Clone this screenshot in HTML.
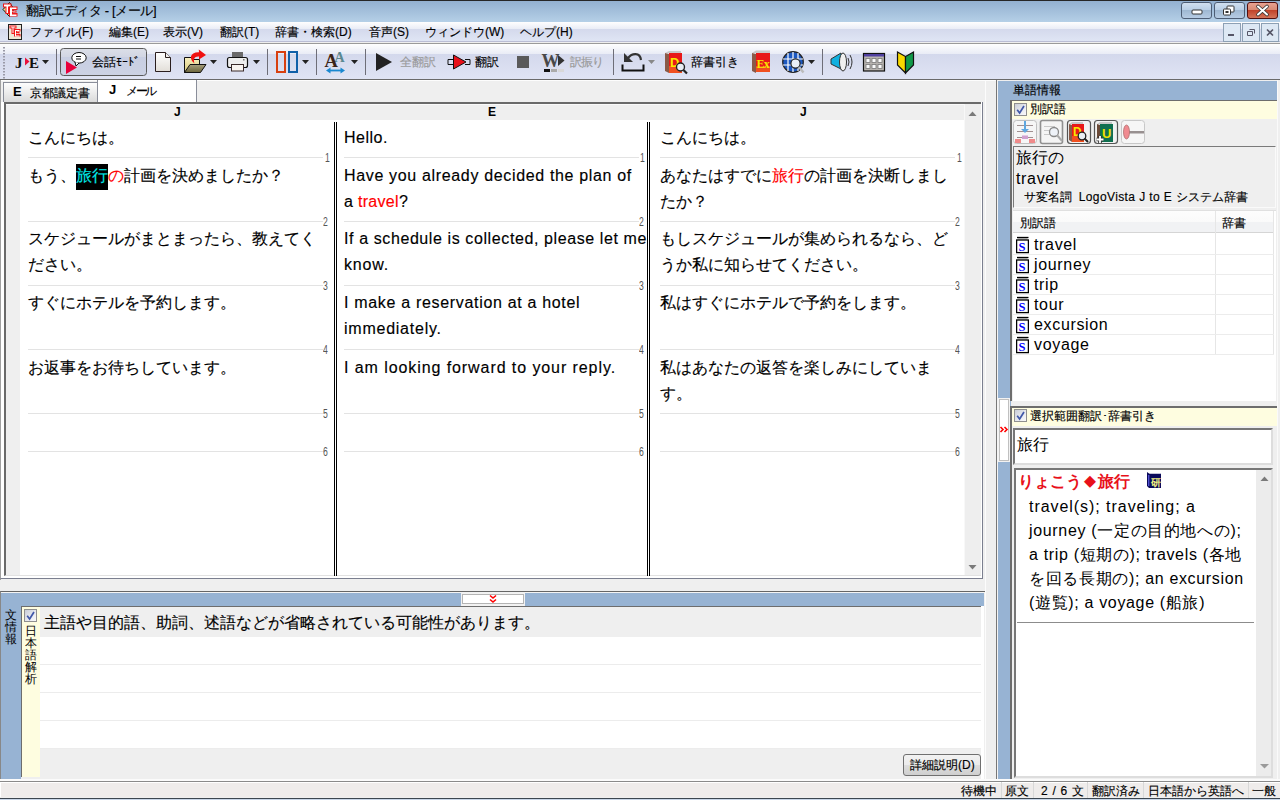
<!DOCTYPE html>
<html lang="ja"><head><meta charset="utf-8">
<style>
*{box-sizing:border-box}
html,body{margin:0;padding:0;width:1280px;height:800px;overflow:hidden;background:#efefef;font-family:"Liberation Sans",sans-serif;color:#000}
.a{position:absolute}
.t12{font-size:12px;line-height:14px;white-space:nowrap;-webkit-text-stroke:0.15px}
.ed{font-size:16px;line-height:26px;white-space:nowrap;position:absolute;-webkit-text-stroke:0.15px}
.en{font-size:16px;letter-spacing:0.66px}
.sep{position:absolute;height:1px;background:#e3e3e3}
.num{position:absolute;font-size:12px;line-height:12px;color:#555;transform:scaleX(0.72);transform-origin:left}
.dv{position:absolute;top:122px;height:454px;width:3px;border-left:1px solid #000;border-right:1px solid #000}
</style></head><body>
<!-- title bar -->
<div class="a" style="left:0;top:0;width:1280px;height:1px;background:#262626"></div>
<div class="a" style="left:0;top:1px;width:1280px;height:21px;background:linear-gradient(#93b0d0,#b5d0e7)"></div>
<div class="a t12" style="left:26px;top:4px;font-size:13px;line-height:14px;color:#000;letter-spacing:-0.4px">翻訳エディタ - [メール]</div>
<!-- menu bar -->
<div class="a" style="left:0;top:22px;width:1280px;height:7px;background:linear-gradient(#fefefe,#e9ecf6)"></div>
<div class="a" style="left:0;top:29px;width:1280px;height:12px;background:linear-gradient(#d4d9ec,#dfe5f4)"></div>
<div class="a" style="left:0;top:41px;width:1280px;height:1px;background:#babdd4"></div>
<div class="a" style="left:0;top:42px;width:1280px;height:1px;background:#eeeeee"></div>
<div class="a" style="left:0;top:43px;width:1280px;height:1px;background:#9a9a9a"></div>
<div class="a t12" style="left:30px;top:25px">ファイル(F)</div>
<div class="a t12" style="left:109px;top:25px">編集(E)</div>
<div class="a t12" style="left:163px;top:25px">表示(V)</div>
<div class="a t12" style="left:220px;top:25px">翻訳(T)</div>
<div class="a t12" style="left:275px;top:25px">辞書・検索(D)</div>
<div class="a t12" style="left:369px;top:25px">音声(S)</div>
<div class="a t12" style="left:425px;top:25px">ウィンドウ(W)</div>
<div class="a t12" style="left:520px;top:25px">ヘルプ(H)</div>
<!-- toolbar -->
<div class="a" style="left:0;top:44px;width:1280px;height:10px;background:linear-gradient(#fefefe,#e9ecf6)"></div>
<div class="a" style="left:0;top:54px;width:1280px;height:25px;background:linear-gradient(#d3d8ec,#e0e4f4)"></div>
<div class="a" style="left:0;top:79px;width:1280px;height:1px;background:#6a6a6a"></div>
<!-- toolbar svg -->
<svg class="a" style="left:0;top:0" width="1280" height="80" viewBox="0 0 1280 80">
<defs>
<linearGradient id="btnG" x1="0" y1="0" x2="0" y2="1"><stop offset="0" stop-color="#dcdfe8"/><stop offset="0.3" stop-color="#d2d6e3"/><stop offset="0.31" stop-color="#c8cee2"/><stop offset="1" stop-color="#ccd2e4"/></linearGradient>
<linearGradient id="minG" x1="0" y1="0" x2="0" y2="1"><stop offset="0" stop-color="#d3e1f0"/><stop offset="0.45" stop-color="#b9cfe6"/><stop offset="0.5" stop-color="#9fb8d2"/><stop offset="1" stop-color="#b8cde4"/></linearGradient>
<linearGradient id="clsG" x1="0" y1="0" x2="0" y2="1"><stop offset="0" stop-color="#e9a493"/><stop offset="0.45" stop-color="#d88a74"/><stop offset="0.5" stop-color="#c1432a"/><stop offset="1" stop-color="#d5775c"/></linearGradient>
<linearGradient id="docG" x1="0" y1="0" x2="0" y2="1"><stop offset="0" stop-color="#ffffff"/><stop offset="1" stop-color="#e2ded8"/></linearGradient>
<linearGradient id="fldG" x1="0" y1="0" x2="0" y2="1"><stop offset="0" stop-color="#f8f0c0"/><stop offset="1" stop-color="#d8c878"/></linearGradient>
<linearGradient id="fldF" x1="0" y1="0" x2="0" y2="1"><stop offset="0" stop-color="#a8a080"/><stop offset="1" stop-color="#6a6438"/></linearGradient>
</defs>
<!-- title icon -->
<path d="M9.5 2.5 L14 9 L9.5 16.5 L3 9.5 Z" fill="#f4e890" stroke="#111" stroke-width="1"/>
<path d="M3 3.5 h8.5 v4 h-2.5 v6.5 h-3.5 v-6.5 h-2.5 z" fill="#f01818"/>
<path d="M4 4.5 h6.5 v2 h-2.5 v6.5 h-1.5 v-6.5 h-2.5 z" fill="#fff"/>
<path d="M9 6.5 h8.5 v3.5 h-4.5 v0.5 h3.5 v2 h-3.5 v0.5 h4.5 v3.5 h-8.5 z" fill="#f01818"/>
<path d="M10 7.5 h6.5 v1.5 h-4.5 v2.5 h3.5 v0.5 h-3.5 v2.5 h4.5 v1.5 h-6.5 z" fill="#fff"/>
<!-- menu icon -->
<rect x="8.5" y="24.5" width="13" height="15" fill="#ece8d8" stroke="#222" stroke-width="1"/>
<path d="M9.5 25.5 h7 v3 h-2 v5.5 h-3 v-5.5 h-2 z" fill="#f01818"/>
<path d="M10.5 26.5 h5 v1 h-2 v5.5 h-1 v-5.5 h-2 z" fill="#fff"/>
<path d="M14 29 h6.5 v2.5 h-3.5 v0.5 h2.5 v1.5 h-2.5 v0.5 h3.5 v2.5 h-6.5 z" fill="#f01818"/>
<path d="M15 30 h4.5 v1 h-3.5 v2 h2.5 v0.5 h-2.5 v2 h3.5 v1 h-4.5 z" fill="#fff"/>
<!-- window buttons -->
<rect x="1181.5" y="2.5" width="30" height="16" rx="2.5" fill="url(#minG)" stroke="#4d5d74"/>
<rect x="1192" y="10" width="10" height="4" rx="1" fill="#fff" stroke="#333" stroke-width="1"/>
<rect x="1214.5" y="2.5" width="30" height="16" rx="2.5" fill="url(#minG)" stroke="#4d5d74"/>
<rect x="1227" y="6" width="7" height="6" rx="0.8" fill="#fff" stroke="#333" stroke-width="1"/>
<rect x="1223.5" y="9" width="7" height="6" rx="0.8" fill="#fff" stroke="#333" stroke-width="1"/>
<rect x="1225.5" y="11" width="3" height="2" fill="#333"/>
<rect x="1247.5" y="2.5" width="30" height="16" rx="2.5" fill="url(#clsG)" stroke="#501010"/>
<path d="M1258 6.5 L1267 14.5 M1267 6.5 L1258 14.5" stroke="#333" stroke-width="3.6" stroke-linecap="round"/>
<path d="M1258 6.5 L1267 14.5 M1267 6.5 L1258 14.5" stroke="#fff" stroke-width="2" stroke-linecap="round"/>
<!-- mdi buttons -->
<rect x="1223.5" y="23.5" width="17" height="18" fill="#dde8f4" stroke="#8da0b4"/>
<rect x="1228" y="34" width="6" height="2" fill="#556"/>
<rect x="1242.5" y="23.5" width="17" height="18" fill="#dde8f4" stroke="#8da0b4"/>
<path d="M1249.5 29.5 h5 v4 M1247.5 31.5 h5 v4 h-5 z" fill="none" stroke="#556" stroke-width="1"/>
<rect x="1261.5" y="23.5" width="17" height="18" fill="#dde8f4" stroke="#8da0b4"/>
<path d="M1267 29.5 l6 6 M1273 29.5 l-6 6" stroke="#556" stroke-width="1.6"/>
<!-- grip -->
<g fill="#9a9aa8"><rect x="3" y="47" width="2" height="1.5"/><rect x="3" y="50" width="2" height="1.5"/><rect x="3" y="53" width="2" height="1.5"/><rect x="3" y="56" width="2" height="1.5"/><rect x="3" y="59" width="2" height="1.5"/><rect x="3" y="62" width="2" height="1.5"/><rect x="3" y="65" width="2" height="1.5"/><rect x="3" y="68" width="2" height="1.5"/><rect x="3" y="71" width="2" height="1.5"/><rect x="3" y="74" width="2" height="1.5"/><rect x="3" y="77" width="2" height="1.5"/></g>
<!-- J>E -->
<text x="15" y="68" font-family="Liberation Serif" font-weight="bold" font-size="15" fill="#111">J</text>
<path d="M25 57.5 L29.5 61.5 L25 65.5 Z" fill="#e8103c"/>
<text x="29" y="68" font-family="Liberation Serif" font-weight="bold" font-size="15" fill="#111">E</text>
<path d="M42 60 h7 l-3.5 4 z" fill="#222"/>
<!-- separators -->
<g fill="#6e6e78"><rect x="56" y="49" width="1" height="26"/><rect x="267" y="49" width="1" height="26"/><rect x="316" y="49" width="1" height="26"/><rect x="365" y="49" width="1" height="26"/><rect x="613" y="49" width="1" height="26"/><rect x="822" y="49" width="1" height="26"/></g>
<!-- kaiwa button -->
<rect x="60.5" y="48.5" width="86" height="27" rx="3" fill="url(#btnG)" stroke="#5a5a5a"/>
<ellipse cx="79" cy="57.8" rx="7.2" ry="5.3" fill="#fff" stroke="#111" stroke-width="1"/>
<path d="M75 62 L76 66 L79 63" fill="#fff" stroke="#111" stroke-width="1"/>
<path d="M76 56.5 h5 M76 59 h5" stroke="#111" stroke-width="1"/>
<path d="M66 61 L77 67.5 L66 74 Z" fill="#e8003c"/>
<!-- new doc -->
<path d="M155.5 52.5 h10 l5 5 v14 h-15 z" fill="url(#docG)" stroke="#2a1e1e" stroke-width="1"/>
<path d="M165.5 52.5 v5 h5" fill="#f0f0f0" stroke="#2a1e1e" stroke-width="1"/>
<!-- folder -->
<path d="M184.5 72.5 V57.5 h7 l1.5 2 h6.5 v13 z" fill="url(#fldG)" stroke="#111" stroke-width="1"/>
<path d="M184.5 72.5 L190 64.5 H206 L200.5 72.5 Z" fill="url(#fldF)" stroke="#111" stroke-width="1"/>
<path d="M194.5 63.5 C189 59 189.5 52 199 52.2 L198.8 49.5 L206 55 L199 59.5 L199 56.5 C194.5 56 193 59 194.5 63.5 Z" fill="#f01010"/>
<path d="M210 60 h7 l-3.5 4 z" fill="#222"/>
<!-- printer -->
<rect x="232" y="52" width="11" height="5" fill="#6a6a6a"/>
<rect x="227.5" y="57.5" width="20" height="10" rx="2" fill="#eeeeee" stroke="#111" stroke-width="1.2"/>
<rect x="231.5" y="64.5" width="12" height="6.5" fill="#f8f4f0" stroke="#3a2a2a" stroke-width="1"/>
<rect x="243" y="59" width="1.5" height="1.5" fill="#777"/>
<path d="M253 60 h7 l-3.5 4 z" fill="#222"/>
<!-- columns -->
<rect x="277" y="52" width="8" height="20" fill="none" stroke="#d84010" stroke-width="2"/>
<rect x="289" y="52" width="8" height="20" fill="none" stroke="#1060a8" stroke-width="2"/>
<path d="M302 60 h7 l-3.5 4 z" fill="#222"/>
<!-- AA -->
<text x="334.5" y="62" font-family="Liberation Serif" font-weight="bold" font-size="14" fill="#5a8890">A</text>
<text x="324.5" y="67" font-family="Liberation Serif" font-weight="bold" font-size="18.5" fill="#3a2418">A</text>
<path d="M326 70.5 L330.5 67.5 V73.5 Z M345 70.5 L340.5 67.5 V73.5 Z" fill="#1a88d0"/>
<rect x="329" y="69.6" width="13" height="1.8" fill="#1a88d0"/>
<path d="M351 60 h7 l-3.5 4 z" fill="#222"/>
<!-- play -->
<path d="M376 53 L392 62 L376 71 Z" fill="#222"/>
<!-- translate -->
<path d="M453 59.5 h-5 v5 h5 M465 59.5 h5 v5 h-5" fill="none" stroke="#111" stroke-width="1"/>
<path d="M453.5 55 L466 62 L453.5 69 Z" fill="#e8101a" stroke="#111" stroke-width="1"/>
<!-- stop -->
<rect x="517" y="56" width="12" height="12" fill="#5a5a5a"/>
<!-- W -->
<text x="541.5" y="67" font-family="Liberation Serif" font-weight="bold" font-size="19" fill="#484848" transform="translate(541.5 67) scale(0.95 1) translate(-541.5 -67)">W</text>
<path d="M558 55 L564.5 60.5 L558 66 Z" fill="#333"/>
<rect x="544" y="69" width="6" height="3" fill="#111"/><rect x="551" y="69" width="6" height="3" fill="#aaa"/><rect x="558" y="69" width="6" height="3" fill="#d8d8d8"/>
<!-- undo -->
<path d="M622.5 64.5 v6 h21 v-6" fill="none" stroke="#111" stroke-width="2"/>
<path d="M624 53 L624 62 L633 62 Z" fill="#333"/>
<path d="M628 58 C632 53 640 52 641 60" fill="none" stroke="#333" stroke-width="2.2"/>
<path d="M648 60 h7 l-3.5 4 z" fill="#888"/>
<!-- dict book -->
<path d="M665 53 L669 51 L681 51 L681 53 Z" fill="#c8c8c8"/>
<path d="M665 53 L669 54 V73 L665 71 Z" fill="#8a5a48"/>
<rect x="669" y="53" width="13" height="20" fill="#e81818"/>
<rect x="669" y="66" width="13" height="7" fill="#f05020"/>
<text x="670" y="67" font-family="Liberation Sans" font-weight="bold" font-size="13" fill="#f8e800">D</text>
<circle cx="680.5" cy="67" r="4" fill="#e8eef4" stroke="#222" stroke-width="1.4"/>
<path d="M683.5 70 L687 73.5" stroke="#222" stroke-width="2.2"/>
<!-- Ex book -->
<path d="M752 53 L756 50.5 L770 50.5 L770 53 Z" fill="#c8c8c8"/>
<path d="M752 53 L756 54 V73 L752 71 Z" fill="#8a5a48"/>
<rect x="756" y="53" width="14" height="19" fill="#e81818"/>
<rect x="756" y="66" width="14" height="6" fill="#f05020"/>
<text x="756.5" y="67.5" font-family="Liberation Serif" font-weight="bold" font-size="12" fill="#f8e800" letter-spacing="-0.8">Ex</text>
<!-- globe -->
<circle cx="793" cy="62" r="10.3" fill="#1c58c0" stroke="#222" stroke-width="1.2"/>
<path d="M783 59 h20 M783 65 h20 M788 53 v18 M793 52 v20 M798 53 v18" stroke="#fff" stroke-width="1.2"/>
<circle cx="795.5" cy="63.5" r="4.6" fill="#e8eef6" stroke="#222" stroke-width="1.2"/>
<path d="M799 67 L803.5 72.5" stroke="#bbb" stroke-width="2.4"/>
<path d="M808 60 h7 l-3.5 4 z" fill="#222"/>
<!-- speaker -->
<path d="M831 59 L841 53 L843 70 L831 64 Z" fill="#10b0e0" stroke="#333" stroke-width="1"/>
<ellipse cx="843" cy="62" rx="3.5" ry="9" fill="#f0f0f0" stroke="#333" stroke-width="1"/>
<path d="M848 58 Q850 62 848 66 M850 55 Q854 62 850 69" fill="none" stroke="#333" stroke-width="1"/>
<!-- grid -->
<rect x="863.5" y="53.5" width="21" height="17.5" fill="#b8b4b0" stroke="#111" stroke-width="1.2"/>
<rect x="864" y="54" width="20" height="2.5" fill="#5040a0"/>
<g fill="#fafafa" stroke="#777" stroke-width="0.8"><rect x="866" y="58.5" width="4" height="4"/><rect x="872" y="58.5" width="4" height="4"/><rect x="878" y="58.5" width="4" height="4"/><rect x="866" y="64.5" width="4" height="4"/><rect x="872" y="64.5" width="4" height="4"/><rect x="878" y="64.5" width="4" height="4"/></g>
<!-- wakaba -->
<path d="M897.5 52 L905.5 56.5 V73 L897.5 65 Z" fill="#f8d800" stroke="#111" stroke-width="1.2"/>
<path d="M913.5 52 L905.5 56.5 V73 L913.5 65 Z" fill="#109848" stroke="#111" stroke-width="1.2"/>
</svg>
<div class="a t12" style="left:92px;top:55px">会話ﾓｰﾄﾞ</div>
<div class="a t12" style="left:400px;top:55px;color:#999">全翻訳</div>
<div class="a t12" style="left:475px;top:55px">翻訳</div>
<div class="a t12" style="left:570px;top:55px;color:#999;letter-spacing:-1px">訳振り</div>
<div class="a t12" style="left:691px;top:55px">辞書引き</div>
<!-- tabs row -->
<div class="a" style="left:0;top:80px;width:996px;height:22px;background:#efefef"></div>
<div class="a" style="left:0;top:80px;width:996px;height:1px;background:#fdfdfd"></div>
<div class="a" style="left:0;top:80px;width:1px;height:500px;background:#a0a0a0"></div>
<div class="a" style="left:3px;top:82px;width:95px;height:20px;border:1px solid #8a8e9a;border-bottom:none;background:linear-gradient(#fdfdfd,#ececec 50%,#dadada)"></div>
<div class="a" style="left:13px;top:85px;font-weight:bold;font-size:13px;line-height:14px">E</div>
<div class="a t12" style="left:30px;top:86px">京都議定書</div>
<div class="a" style="left:97px;top:80px;width:100px;height:22px;border:1px solid #8a8e9a;border-top:none;border-bottom:none;background:#fff"></div>
<div class="a" style="left:109px;top:83px;font-weight:bold;font-size:13px;line-height:14px">J</div>
<div class="a t12" style="left:126px;top:84px;letter-spacing:-2.3px">メール</div>
<!-- editor frame -->
<div class="a" style="left:0;top:102px;width:983px;height:477px;border-left:1px solid #a0a0a0;border-right:1px solid #7b7f8f;border-bottom:1px solid #7b7f8f;background:#fff"></div>
<div class="a" style="left:4px;top:102px;width:977px;height:474px;border-left:2px solid #6a6a6a;border-top:2px solid #6a6a6a;border-bottom:1px solid #e2e2e2;background:#efefef"></div>
<div class="a" style="left:6px;top:104px;width:958px;height:1px;background:#fafafa"></div>
<div class="a" style="left:20px;top:120px;width:944px;height:455px;background:#fff"></div>
<div class="a" style="left:964px;top:104px;width:17px;height:471px;background:#eeeeee;border-left:1px solid #f8f8f8"></div>
<div class="a" style="left:174px;top:105px;font-size:12px;line-height:14px;font-weight:bold">J</div>
<div class="a" style="left:488px;top:105px;font-size:12px;line-height:14px;font-weight:bold">E</div>
<div class="a" style="left:800px;top:105px;font-size:12px;line-height:14px;font-weight:bold">J</div>
<div class="dv" style="left:334px"></div>
<div class="dv" style="left:647px"></div>
<!-- separators -->
<div class="sep" style="left:28px;top:157px;width:295px"></div><div class="num" style="left:325px;top:152px">1</div>
<div class="sep" style="left:28px;top:221px;width:295px"></div><div class="num" style="left:323px;top:216px">2</div>
<div class="sep" style="left:28px;top:285px;width:295px"></div><div class="num" style="left:323px;top:280px">3</div>
<div class="sep" style="left:28px;top:349px;width:295px"></div><div class="num" style="left:323px;top:344px">4</div>
<div class="sep" style="left:28px;top:413px;width:295px"></div><div class="num" style="left:323px;top:408px">5</div>
<div class="sep" style="left:28px;top:451px;width:295px"></div><div class="num" style="left:323px;top:446px">6</div>
<div class="sep" style="left:344px;top:157px;width:295px"></div><div class="num" style="left:640px;top:152px">1</div>
<div class="sep" style="left:344px;top:221px;width:295px"></div><div class="num" style="left:639px;top:216px">2</div>
<div class="sep" style="left:344px;top:285px;width:295px"></div><div class="num" style="left:639px;top:280px">3</div>
<div class="sep" style="left:344px;top:349px;width:295px"></div><div class="num" style="left:639px;top:344px">4</div>
<div class="sep" style="left:344px;top:413px;width:295px"></div><div class="num" style="left:639px;top:408px">5</div>
<div class="sep" style="left:344px;top:451px;width:295px"></div><div class="num" style="left:639px;top:446px">6</div>
<div class="sep" style="left:660px;top:157px;width:295px"></div><div class="num" style="left:957px;top:152px">1</div>
<div class="sep" style="left:660px;top:221px;width:295px"></div><div class="num" style="left:955px;top:216px">2</div>
<div class="sep" style="left:660px;top:285px;width:295px"></div><div class="num" style="left:955px;top:280px">3</div>
<div class="sep" style="left:660px;top:349px;width:295px"></div><div class="num" style="left:955px;top:344px">4</div>
<div class="sep" style="left:660px;top:413px;width:295px"></div><div class="num" style="left:955px;top:408px">5</div>
<div class="sep" style="left:660px;top:451px;width:295px"></div><div class="num" style="left:955px;top:446px">6</div>
<!-- col1 -->
<div class="ed" style="left:28px;top:125px">こんにちは。</div>
<div class="ed" style="left:28px;top:163px">もう、<span style="display:inline-block;height:27px;vertical-align:top;background:linear-gradient(transparent 1px,#000 1px);color:#00e8e8">旅行</span><span style="color:#f00">の</span>計画を決めましたか？</div>
<div class="ed" style="left:28px;top:226px">スケジュールがまとまったら、教えてく<br>ださい。</div>
<div class="ed" style="left:28px;top:290px">すぐにホテルを予約します。</div>
<div class="ed" style="left:28px;top:355px">お返事をお待ちしています。</div>
<!-- col2 -->
<div class="ed" style="left:344px;top:125px;letter-spacing:0.5px">Hello.</div>
<div class="ed" style="left:344px;top:163px"><span style="letter-spacing:0.66px">Have you already decided the plan of</span><br><span style="letter-spacing:0.3px">a <span style="color:#f00">travel</span>?</span></div>
<div class="ed" style="left:344px;top:226px"><span style="letter-spacing:0.6px">If a schedule is collected, please let me</span><br><span style="letter-spacing:0.8px">know.</span></div>
<div class="ed" style="left:344px;top:290px"><span style="letter-spacing:0.68px">I make a reservation at a hotel</span><br><span style="letter-spacing:0.76px">immediately.</span></div>
<div class="ed" style="left:344px;top:355px;letter-spacing:0.92px">I am looking forward to your reply.</div>
<!-- col3 -->
<div class="ed" style="left:660px;top:125px">こんにちは。</div>
<div class="ed" style="left:660px;top:163px">あなたはすでに<span style="color:#f00">旅行</span>の計画を決断しまし<br>たか？</div>
<div class="ed" style="left:660px;top:226px">もしスケジュールが集められるなら、ど<br>うか私に知らせてください。</div>
<div class="ed" style="left:660px;top:290px">私はすぐにホテルで予約をします。</div>
<div class="ed" style="left:660px;top:355px">私はあなたの返答を楽しみにしていま<br>す。</div>

<!-- bottom panel -->
<div class="a" style="left:0;top:591px;width:985px;height:188px;border-top:1px solid #666;border-left:1px solid #888;background:#efefef"></div>
<div class="a" style="left:1px;top:592px;width:983px;height:1px;background:#f4f4f4"></div><div class="a" style="left:1px;top:593px;width:983px;height:13px;background:#97b3d3"></div>
<div class="a" style="left:1px;top:593px;width:20px;height:186px;background:#97b3d3"></div>
<div class="a" style="left:461px;top:592px;width:64px;height:14px;background:#f2f2f2"></div>
<div class="a" style="left:462px;top:594px;width:62px;height:10px;background:#fff;border:1px solid #b4b4b4"></div>
<svg class="a" style="left:488px;top:594px" width="10" height="10" viewBox="0 0 10 10"><path d="M2 1.5 L5 4 L8 1.5 M2 5.5 L5 8 L8 5.5" fill="none" stroke="#f00" stroke-width="1.6"/></svg>
<div class="a" style="left:5px;top:609px;width:12px;font-size:12px;line-height:12px;white-space:normal;word-break:break-all">文情報</div>
<div class="a" style="left:21px;top:606px;width:963px;height:171px;border-top:1px solid #6d6d6d;border-left:1px solid #6d6d6d;background:#efefef"></div>
<div class="a" style="left:22px;top:607px;width:18px;height:170px;background:#fefde0"></div>
<div class="a" style="left:24px;top:609px;width:13px;height:13px;border:1px solid #8f8f8f;background:linear-gradient(135deg,#c9cdd6,#eef0f4 70%,#f8f8fa)"></div>
<svg class="a" style="left:24px;top:609px" width="13" height="13" viewBox="0 0 13 13"><path d="M3.2 6.8 L5.6 10 L10 3" fill="none" stroke="#4058a8" stroke-width="1.7"/></svg>
<div class="a" style="left:25px;top:625px;width:12px;font-size:12px;line-height:12px;white-space:normal;word-break:break-all">日本語解析</div>
<div class="a" style="left:40px;top:607px;width:941px;height:30px;background:#efefef"></div>
<div class="a" style="left:40px;top:637px;width:941px;height:112px;background:#fff"></div>
<div class="sep" style="left:40px;top:664px;width:941px;background:#ececec"></div>
<div class="sep" style="left:40px;top:692px;width:941px;background:#ececec"></div>
<div class="sep" style="left:40px;top:720px;width:941px;background:#ececec"></div>
<div class="sep" style="left:40px;top:748px;width:941px;background:#ececec"></div>
<div class="ed" style="left:44px;top:610px">主語や目的語、助詞、述語などが省略されている可能性があります。</div>
<div class="a" style="left:903px;top:754px;width:78px;height:22px;border:1px solid #707070;border-radius:3px;background:linear-gradient(#f2f2f2,#ebebeb 50%,#dddddd 51%,#cfcfcf)"></div>
<div class="a t12" style="left:910px;top:758px">詳細説明(D)</div>

<div class="a" style="left:981px;top:606px;width:3px;height:173px;background:#fff"></div>
<div class="a" style="left:985px;top:80px;width:1px;height:699px;background:#fcfcfc"></div>
<!-- right panel -->
<div class="a" style="left:996px;top:80px;width:1px;height:701px;background:#777"></div>
<div class="a" style="left:997px;top:80px;width:1px;height:699px;background:#f4f4f4"></div>
<div class="a" style="left:998px;top:81px;width:279px;height:19px;background:#97b3d3"></div>
<div class="a" style="left:998px;top:81px;width:13px;height:698px;background:#97b3d3"></div>
<div class="a t12" style="left:1013px;top:83px">単語情報</div>
<div class="a" style="left:1010px;top:100px;width:270px;height:301px;border-top:1px solid #6d6d6d;border-left:2px solid #6d6d6d;background:#efefef"></div>
<div class="a" style="left:1012px;top:101px;width:265px;height:18px;background:#fefde0"></div>
<div class="a" style="left:1014px;top:103px;width:13px;height:13px;border:1px solid #8f8f8f;background:linear-gradient(135deg,#c9cdd6,#eef0f4 70%,#f8f8fa)"></div>
<svg class="a" style="left:1014px;top:103px" width="13" height="13" viewBox="0 0 13 13"><path d="M3.2 6.8 L5.6 10 L10 3" fill="none" stroke="#4058a8" stroke-width="1.7"/></svg>
<div class="a t12" style="left:1030px;top:102px">別訳語</div>
<!-- info buttons -->
<svg class="a" style="left:1010px;top:118px" width="140" height="30" viewBox="1010 118 140 30">
<rect x="1013.5" y="120.5" width="23" height="23" rx="3" fill="#f6f6f6" stroke="#c0c0c0"/>
<path d="M1017 125.5 h16 M1017 131.5 h16 M1017 137.5 h16" stroke="#a09090" stroke-width="1"/>
<rect x="1022" y="135.5" width="6" height="3.5" fill="#d0a0d0"/>
<rect x="1015" y="139" width="6" height="4" fill="#f08a8a"/><rect x="1029" y="139" width="6" height="4" fill="#f08a8a"/>
<path d="M1025 121 v9" stroke="#60a8e0" stroke-width="2"/>
<path d="M1021 129 h8 l-4 4 z" fill="#60a8e0"/>
<rect x="1040.5" y="120.5" width="22" height="23" rx="2" fill="#f4f4f4" stroke="#909090" stroke-width="1.6"/>
<path d="M1044 126.5 h11 M1044 130.5 h7 M1044 134.5 h7" stroke="#c8c8c8" stroke-width="1"/>
<circle cx="1054" cy="132" r="4.5" fill="#eef2f8" stroke="#888" stroke-width="1.3"/>
<path d="M1057 135 L1062 141" stroke="#aaa" stroke-width="2"/>
<rect x="1067.5" y="120.5" width="23" height="23" rx="3" fill="#f2f2f2" stroke="#555" stroke-width="1.2"/>
<path d="M1069 124 L1072 122 L1083 122 L1083 124 Z" fill="#c8c8c8"/>
<path d="M1069 124 L1072 125 V142 L1069 140 Z" fill="#8a5a48"/>
<rect x="1072" y="124" width="12" height="18" fill="#e81818"/>
<rect x="1072" y="136" width="12" height="6" fill="#f05020"/>
<text x="1073" y="136" font-family="Liberation Sans" font-weight="bold" font-size="12" fill="#f8e800">D</text>
<circle cx="1082" cy="136" r="3.8" fill="#e8eef4" stroke="#222" stroke-width="1.3"/>
<path d="M1084.5 138.5 L1088 142" stroke="#222" stroke-width="2"/>
<rect x="1094.5" y="120.5" width="23" height="23" rx="3" fill="#f2f2f2" stroke="#555" stroke-width="1.2"/>
<path d="M1097 124 L1100 122 L1112 122 L1112 124 Z" fill="#c8c8c8"/>
<path d="M1097 124 L1100 125 V142 L1097 140 Z" fill="#6a4a38"/>
<rect x="1100" y="124" width="13" height="18" fill="#107050"/>
<text x="1102" y="138" font-family="Liberation Sans" font-weight="bold" font-size="13" fill="#f0e000">U</text>
<path d="M1100 136 v7 M1096.5 139.5 h7" stroke="#333" stroke-width="3.6"/>
<path d="M1100 136 v7 M1096.5 139.5 h7" stroke="#fff" stroke-width="1.8"/>
<rect x="1121.5" y="120.5" width="23" height="23" rx="3" fill="#f6f6f6" stroke="#c8c8c8"/>
<rect x="1129" y="131" width="15" height="2.5" fill="#989090"/>
<ellipse cx="1126.5" cy="132" rx="3" ry="7" fill="#f08a90" stroke="#b07070" stroke-width="0.8"/>
</svg>
<!-- info box -->
<div class="a" style="left:1013px;top:146px;width:263px;height:62px;border-top:1px solid #7a7a7a;border-left:1px solid #7a7a7a;border-right:1px solid #fafafa;border-bottom:1px solid #fafafa;background:#efefef"></div>
<div class="a" style="left:1016px;top:147px;font-size:16px;line-height:22px;white-space:nowrap">旅行の</div>
<div class="a en" style="left:1016px;top:168px;font-size:16px;line-height:22px;white-space:nowrap">travel</div>
<div class="a t12" style="left:1024px;top:190px">サ変名詞&nbsp; <span style="letter-spacing:0.4px">LogoVista J to E</span> システム辞書</div>
<!-- list -->
<div class="a" style="left:1013px;top:210px;width:263px;height:191px;background:#fff;border-top:1px solid #e0e0e0"></div>
<div class="a" style="left:1013px;top:211px;width:261px;height:22px;background:linear-gradient(#fdfdfd,#fafafa 50%,#f1f2f4 51%,#f1f2f4);border-bottom:1px solid #d5d5d5"></div>
<div class="a" style="left:1215px;top:211px;width:1px;height:143px;background:#e6e6e6"></div>
<div class="a" style="left:1273px;top:211px;width:1px;height:143px;background:#e6e6e6"></div>
<div class="a t12" style="left:1020px;top:216px">別訳語</div>
<div class="a t12" style="left:1222px;top:216px">辞書</div>
<div class="sep" style="left:1013px;top:254px;width:261px;background:#ececec"></div>
<svg class="a" style="left:1016px;top:236px" width="13" height="18" viewBox="0 0 13 18"><path d="M1 1.5 h11.5" stroke="#000" stroke-width="1.3"/><path d="M1.5 2.8 h10" stroke="#999" stroke-width="1.2"/><rect x="0.6" y="4" width="11.8" height="12.6" fill="#fff" stroke="#000" stroke-width="1.3"/><text x="2.4" y="14.8" font-family="Liberation Serif" font-weight="bold" font-size="12.5" fill="#0000ff">S</text></svg>
<div class="a en" style="left:1034px;top:235px;font-size:16px;line-height:20px;white-space:nowrap">travel</div>
<div class="sep" style="left:1013px;top:274px;width:261px;background:#ececec"></div>
<svg class="a" style="left:1016px;top:256px" width="13" height="18" viewBox="0 0 13 18"><path d="M1 1.5 h11.5" stroke="#000" stroke-width="1.3"/><path d="M1.5 2.8 h10" stroke="#999" stroke-width="1.2"/><rect x="0.6" y="4" width="11.8" height="12.6" fill="#fff" stroke="#000" stroke-width="1.3"/><text x="2.4" y="14.8" font-family="Liberation Serif" font-weight="bold" font-size="12.5" fill="#0000ff">S</text></svg>
<div class="a en" style="left:1034px;top:255px;font-size:16px;line-height:20px;white-space:nowrap">journey</div>
<div class="sep" style="left:1013px;top:294px;width:261px;background:#ececec"></div>
<svg class="a" style="left:1016px;top:276px" width="13" height="18" viewBox="0 0 13 18"><path d="M1 1.5 h11.5" stroke="#000" stroke-width="1.3"/><path d="M1.5 2.8 h10" stroke="#999" stroke-width="1.2"/><rect x="0.6" y="4" width="11.8" height="12.6" fill="#fff" stroke="#000" stroke-width="1.3"/><text x="2.4" y="14.8" font-family="Liberation Serif" font-weight="bold" font-size="12.5" fill="#0000ff">S</text></svg>
<div class="a en" style="left:1034px;top:275px;font-size:16px;line-height:20px;white-space:nowrap">trip</div>
<div class="sep" style="left:1013px;top:314px;width:261px;background:#ececec"></div>
<svg class="a" style="left:1016px;top:296px" width="13" height="18" viewBox="0 0 13 18"><path d="M1 1.5 h11.5" stroke="#000" stroke-width="1.3"/><path d="M1.5 2.8 h10" stroke="#999" stroke-width="1.2"/><rect x="0.6" y="4" width="11.8" height="12.6" fill="#fff" stroke="#000" stroke-width="1.3"/><text x="2.4" y="14.8" font-family="Liberation Serif" font-weight="bold" font-size="12.5" fill="#0000ff">S</text></svg>
<div class="a en" style="left:1034px;top:295px;font-size:16px;line-height:20px;white-space:nowrap">tour</div>
<div class="sep" style="left:1013px;top:334px;width:261px;background:#ececec"></div>
<svg class="a" style="left:1016px;top:316px" width="13" height="18" viewBox="0 0 13 18"><path d="M1 1.5 h11.5" stroke="#000" stroke-width="1.3"/><path d="M1.5 2.8 h10" stroke="#999" stroke-width="1.2"/><rect x="0.6" y="4" width="11.8" height="12.6" fill="#fff" stroke="#000" stroke-width="1.3"/><text x="2.4" y="14.8" font-family="Liberation Serif" font-weight="bold" font-size="12.5" fill="#0000ff">S</text></svg>
<div class="a en" style="left:1034px;top:315px;font-size:16px;line-height:20px;white-space:nowrap">excursion</div>
<div class="sep" style="left:1013px;top:354px;width:261px;background:#ececec"></div>
<svg class="a" style="left:1016px;top:336px" width="13" height="18" viewBox="0 0 13 18"><path d="M1 1.5 h11.5" stroke="#000" stroke-width="1.3"/><path d="M1.5 2.8 h10" stroke="#999" stroke-width="1.2"/><rect x="0.6" y="4" width="11.8" height="12.6" fill="#fff" stroke="#000" stroke-width="1.3"/><text x="2.4" y="14.8" font-family="Liberation Serif" font-weight="bold" font-size="12.5" fill="#0000ff">S</text></svg>
<div class="a en" style="left:1034px;top:335px;font-size:16px;line-height:20px;white-space:nowrap">voyage</div>

<!-- lower right panel -->
<div class="a" style="left:998px;top:398px;width:12px;height:64px;background:#f2f2f2"></div><div class="a" style="left:999px;top:399px;width:10px;height:62px;background:#fff;border:1px solid #c0c0c0"></div>
<svg class="a" style="left:999px;top:425px" width="10" height="10" viewBox="0 0 10 10"><path d="M1.5 2 L4 4.5 L1.5 7 M5.5 2 L8 4.5 L5.5 7" fill="none" stroke="#f00" stroke-width="1.6"/></svg>
<div class="a" style="left:1010px;top:406px;width:270px;height:373px;border-top:2px solid #6d6d6d;border-left:2px solid #6d6d6d;background:#efefef"></div>
<div class="a" style="left:1012px;top:408px;width:265px;height:18px;background:#fefde0"></div>
<div class="a" style="left:1014px;top:409px;width:13px;height:13px;border:1px solid #8f8f8f;background:linear-gradient(135deg,#c9cdd6,#eef0f4 70%,#f8f8fa)"></div>
<svg class="a" style="left:1014px;top:409px" width="13" height="13" viewBox="0 0 13 13"><path d="M3.2 6.8 L5.6 10 L10 3" fill="none" stroke="#4058a8" stroke-width="1.7"/></svg>
<div class="a t12" style="left:1030px;top:409px">選択範囲翻訳･辞書引き</div>
<div class="a" style="left:1013px;top:428px;width:260px;height:37px;border:2px solid #777;border-right-color:#ddd;border-bottom-color:#ddd;background:#fff"></div>
<div class="a" style="left:1017px;top:434px;font-size:16px;line-height:22px">旅行</div>
<div class="a" style="left:1014px;top:468px;width:259px;height:310px;border:2px solid #777;border-right-color:#ddd;border-bottom-color:#ddd;background:#fff"></div>
<div class="a" style="left:1256px;top:470px;width:15px;height:306px;background:#ececec"></div>
<div class="a" style="left:1018px;top:471px;font-size:16px;line-height:22px;color:#e8101a;font-weight:bold;white-space:nowrap">りょこう<span style="display:inline-block;width:16px;text-align:center;font-size:12px;vertical-align:1px">◆</span>旅行</div>
<svg class="a" style="left:1146px;top:471px" width="16" height="18" viewBox="0 0 16 18"><path d="M1 1 L3 2.5 L15 2.5 L15 17 L3 17 L1 15 Z" fill="#0a0a5a"/><path d="M3 1 L14 1 L15 2.5 L3.5 2.5 Z" fill="#fff"/><rect x="2" y="4" width="1.4" height="11" fill="#5050d0"/><text x="5" y="15" font-family="Liberation Sans" font-size="10" font-weight="bold" fill="#f0f080">研</text></svg>
<div class="a" style="left:1029px;top:495px;font-size:16px;line-height:24px;white-space:nowrap" class="en"><span class="en"><span style="letter-spacing:0.95px">travel(s); traveling; a</span><br>journey (一定の目的地への);<br>a trip (短期の); travels (各地<br>を回る長期の); an excursion<br>(遊覧); a voyage (船旅)</span></div>
<div class="a" style="left:1017px;top:622px;width:237px;height:1px;background:#8c8c8c"></div>

<svg class="a" style="left:0;top:0" width="1280" height="800" viewBox="0 0 1280 800">
<path d="M968.5 116 L972.5 111.5 L976.5 116 Z" fill="#7a7a7a"/>
<path d="M968.5 565 L972.5 569.5 L976.5 565 Z" fill="#7a7a7a"/>
<path d="M1260.5 481 L1264.5 476.5 L1268.5 481 Z" fill="#7a7a7a"/>
<path d="M1260 764 L1264.5 768.5 L1269 764 Z" fill="#9a9a9a"/>
</svg>
<div class="a" style="left:1277px;top:80px;width:3px;height:700px;background:#efefef;border-left:1px solid #fafafa"></div>
<!-- status bar -->
<div class="a" style="left:0;top:779px;width:1280px;height:2px;background:#fbfbfb"></div>
<div class="a" style="left:0;top:781px;width:1280px;height:1px;background:#8a8a8a"></div>
<div class="a" style="left:0;top:782px;width:1280px;height:15px;background:#fff"></div>
<div class="a" style="left:1px;top:783px;width:1279px;height:14px;background:#efeceb"></div>
<div class="a" style="left:0;top:798px;width:1280px;height:1px;background:#3c4650"></div>
<div class="a" style="left:0;top:799px;width:1280px;height:1px;background:#c8d6e8"></div>
<div class="a t12" style="left:961px;top:784px">待機中</div>
<div class="a t12" style="left:1005px;top:784px">原文</div>
<div class="a t12" style="left:1041px;top:784px;letter-spacing:0.7px">2 / 6 文</div>
<div class="a t12" style="left:1092px;top:784px">翻訳済み</div>
<div class="a t12" style="left:1148px;top:784px">日本語から英語へ</div>
<div class="a t12" style="left:1252px;top:784px">一般</div>
<div class="a" style="left:1001px;top:782px;width:1px;height:16px;background:#d8d8d8"></div>
<div class="a" style="left:1033px;top:782px;width:1px;height:16px;background:#d8d8d8"></div>
<div class="a" style="left:1087px;top:782px;width:1px;height:16px;background:#d8d8d8"></div>
<div class="a" style="left:1143px;top:782px;width:1px;height:16px;background:#d8d8d8"></div>
<div class="a" style="left:1248px;top:782px;width:1px;height:16px;background:#d8d8d8"></div>
</body></html>
